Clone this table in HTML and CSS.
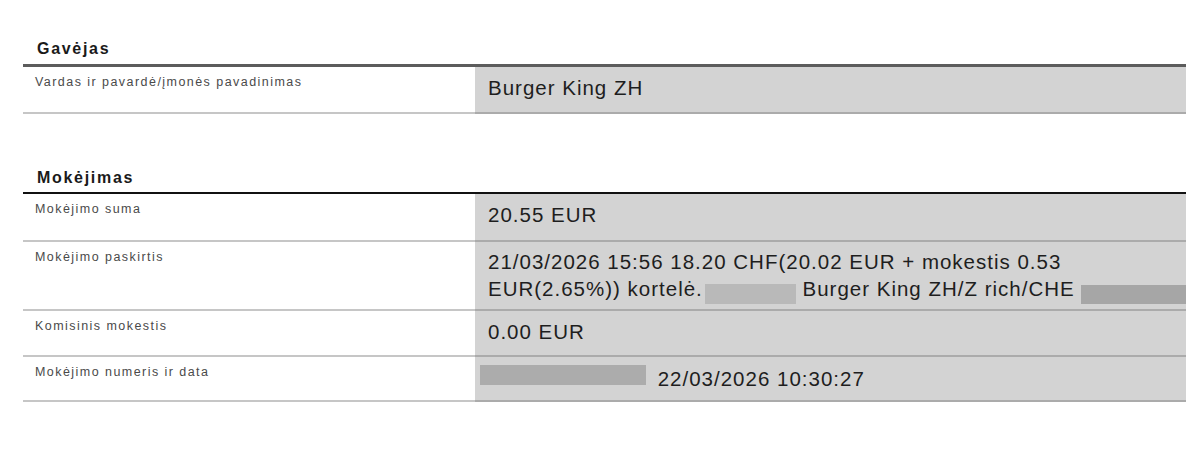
FILE: index.html
```html
<!DOCTYPE html>
<html lang="lt">
<head>
<meta charset="utf-8">
<title>Mokėjimo informacija</title>
<link rel="stylesheet" href="styles.css">
</head>
<body>
<div class="doc">
  <section class="sec">
    <h2 class="sec-title">Gavėjas</h2>
    <div class="row r-recv">
      <div class="lbl">Vardas ir pavardė/įmonės pavadinimas</div>
      <div class="val">Burger King ZH</div>
    </div>
  </section>

  <section class="sec sec-pay">
    <h2 class="sec-title">Mokėjimas</h2>
    <div class="row r-sum">
      <div class="lbl">Mokėjimo suma</div>
      <div class="val">20.55 EUR</div>
    </div>
    <div class="row r-purpose">
      <div class="lbl">Mokėjimo paskirtis</div>
      <div class="val">
        <div class="line">21/03/2026 15:56 18.20 CHF(20.02 EUR + mokestis 0.53</div>
        <div class="line">EUR(2.65%)) kortelė.<span class="redact redact-card"></span> Burger King ZH/Z rich/CHE <span class="redact redact-tail"></span></div>
      </div>
    </div>
    <div class="row r-fee">
      <div class="lbl">Komisinis mokestis</div>
      <div class="val">0.00 EUR</div>
    </div>
    <div class="row r-num">
      <div class="lbl">Mokėjimo numeris ir data</div>
      <div class="val"><span class="redact redact-num"></span> 22/03/2026 10:30:27</div>
    </div>
  </section>
</div>
</body>
</html>
```

FILE: styles.css
```css
html, body {
  margin: 0;
  background: #ffffff;
}

body {
  font-family: "Liberation Sans", Arial, sans-serif;
  color: #1e1e1e;
}

.doc {
  width: 1163px;
  padding: 39px 0 0 23px;
}

.sec-title {
  margin: 0;
  font-size: 16px;
  font-weight: bold;
  line-height: 20px;
  letter-spacing: 1.7px;
  color: #1a1a1a;
  padding: 0 0 5px 14px;
  border-bottom: 3px solid #5c5c5c;
}

.sec-pay {
  margin-top: 54px;
}

.sec-pay .sec-title {
  padding-bottom: 4px;
  border-bottom: 2px solid #111111;
}

.row {
  display: grid;
  grid-template-columns: 452px 1fr;
  box-sizing: border-box;
}

.r-recv { height: 47px; }
.r-sum { height: 48px; }
.r-purpose { height: 69px; }
.r-fee { height: 46px; }
.r-num { height: 45px; }

.lbl {
  padding: 7px 0 0 12px;
  font-size: 12.5px;
  line-height: 16px;
  letter-spacing: 1.45px;
  color: #4a4a4a;
  border-bottom: 2px solid #c6c6c6;
}

.val {
  background: #d3d3d3;
  padding: 8px 0 0 13px;
  font-size: 20.5px;
  line-height: 25px;
  letter-spacing: 1px;
  color: #1e1e1e;
  border-bottom: 2px solid #ababab;
  overflow: hidden;
  white-space: nowrap;
}

.line {
  line-height: 27px;
}

.r-purpose .val {
  padding-top: 6px;
}

.redact {
  display: inline-block;
  height: 20px;
  vertical-align: -8px;
  background: #ababab;
}

.redact-card {
  width: 91px;
  margin-left: 2px;
  background: #b9b9b9;
}

.redact-tail {
  width: 130px;
  height: 19px;
  background: #a6a6a6;
}

.redact-num {
  width: 166px;
  height: 20px;
  margin-left: -8px;
  margin-right: 5px;
  vertical-align: 1px;
  background: #acacac;
}
```
